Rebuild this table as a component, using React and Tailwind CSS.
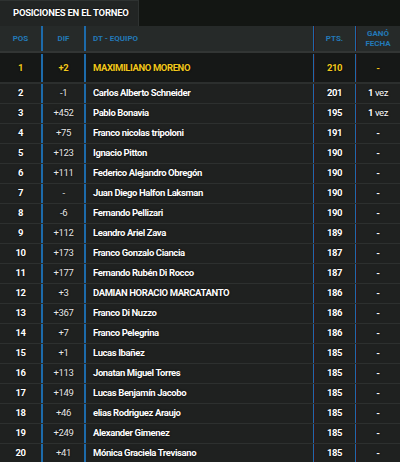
import React from "react";

const rows = [
  ["2", "-1", "Carlos Alberto Schneider", "201", "1 vez"],
  ["3", "+452", "Pablo Bonavia", "195", "1 vez"],
  ["4", "+75", "Franco nicolas tripoloni", "191", "-"],
  ["5", "+123", "Ignacio Pitton", "190", "-"],
  ["6", "+111", "Federico Alejandro Obregón", "190", "-"],
  ["7", "-", "Juan Diego Halfon Laksman", "190", "-"],
  ["8", "-6", "Fernando Pellizari", "190", "-"],
  ["9", "+112", "Leandro Ariel Zava", "189", "-"],
  ["10", "+173", "Franco Gonzalo Ciancia", "187", "-"],
  ["11", "+177", "Fernando Rubén Di Rocco", "187", "-"],
  ["12", "+3", "DAMIAN HORACIO MARCATANTO", "186", "-"],
  ["13", "+367", "Franco Di Nuzzo", "186", "-"],
  ["14", "+7", "Franco Pelegrina", "186", "-"],
  ["15", "+1", "Lucas Ibañez", "185", "-"],
  ["16", "+113", "Jonatan Miguel Torres", "185", "-"],
  ["17", "+149", "Lucas Benjamín Jacobo", "185", "-"],
  ["18", "+46", "elias Rodriguez Araujo", "185", "-"],
  ["19", "+249", "Alexander Gimenez", "185", "-"],
  ["20", "+41", "Mónica Graciela Trevisano", "185", "-"],
];

const grid = "grid grid-cols-[43px_43px_1fr_42px_44px]";
const line = "border-r-2 border-[#1d6bab]";
const lineRed = "border-r border-[#1d6bab] shadow-[1px_0_0_#3a1414]";

export default function App() {
  return (
    <div
      className="w-[400px] h-[462px] overflow-hidden bg-[#1f2120] text-white"
      style={{ fontFamily: "Roboto, 'Liberation Sans', sans-serif" }}
    >
      {/* tab bar */}
      <div className="flex h-[26px] bg-[#131613]">
        <div className="w-[139px] bg-[#222524] border-t border-r border-[#2e3231] flex items-center pl-[13px] text-[9.5px] font-bold tracking-tight [text-shadow:0_0_2px_#000]">
          POSICIONES EN EL TORNEO
        </div>
      </div>

      {/* header */}
      <div className={`${grid} h-[27px] bg-[#262a29] border-b-2 border-[#323534] text-[8px] font-bold text-[#2379b8]`}>
        <div className={`${line} flex items-center justify-center`}>POS</div>
        <div className={`${line} flex items-center justify-center`}>DIF</div>
        <div className={`${lineRed} flex items-center pl-[7px]`}>DT - EQUIPO</div>
        <div className={`${lineRed} flex items-center justify-center`}>PTS.</div>
        <div className="flex flex-col items-center justify-center leading-[10px]">
          <span>GANÓ</span>
          <span>FECHA</span>
        </div>
      </div>

      {/* leader */}
      <div className={`${grid} h-[31px] pt-px bg-[#161817] border-b-2 border-[#2c2f2e] text-[9.5px] font-bold text-[#f2c81d] tracking-[-0.4px] [text-shadow:0_0_2px_#000]`}>
        <div className={`${line} flex items-center justify-center`}>1</div>
        <div className={`${line} flex items-center justify-center`}>+2</div>
        <div className={`${lineRed} flex items-center pl-[7px]`}>MAXIMILIANO MORENO</div>
        <div className={`${lineRed} flex items-center justify-center`}>210</div>
        <div className="flex items-center justify-center">-</div>
      </div>

      {rows.map(([pos, dif, name, pts, won]) => (
        <div
          key={pos}
          className={`${grid} h-[20px] bg-[#1f2120] border-b border-[#2d302f] text-[9.5px] font-bold tracking-[-0.4px] [text-shadow:0_0_2px_#000]`}
        >
          <div className={`${line} flex items-center justify-center`}>{pos}</div>
          <div className={`${line} flex items-center justify-center font-normal text-[#e6e6e6]`}>{dif}</div>
          <div className={`${lineRed} flex items-center pl-[7px] whitespace-nowrap overflow-hidden`}>{name}</div>
          <div className={`${lineRed} flex items-center justify-center`}>{pts}</div>
          <div className="flex items-center justify-center">
            {won === "1 vez" ? (
              <span>
                1 <span className="font-normal">vez</span>
              </span>
            ) : (
              won
            )}
          </div>
        </div>
      ))}
    </div>
  );
}
